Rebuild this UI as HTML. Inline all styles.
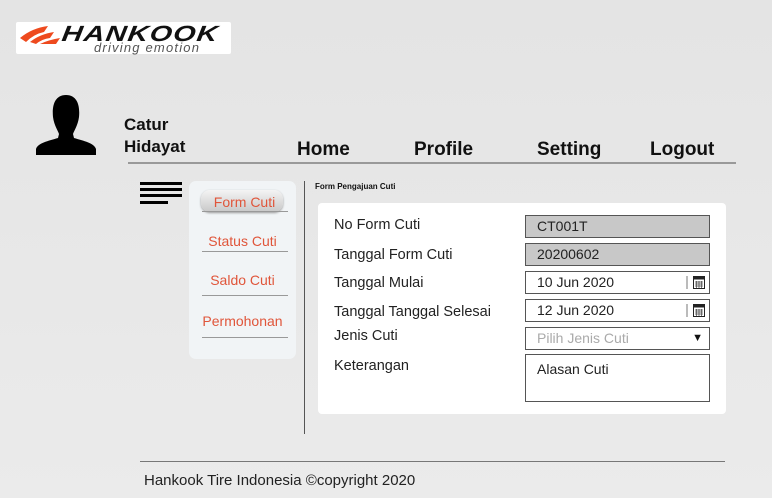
<html><head><style>
body{margin:0;width:772px;height:498px;background:linear-gradient(#e4e4e4,#ebebeb);font-family:"Liberation Sans",sans-serif;position:relative;overflow:hidden}
.a{position:absolute}
.nav{font-weight:bold;font-size:19px;color:#111;top:139px}
.menu{color:#e0553a;font-size:14px;left:189px;width:107px;text-align:center}
.ml{height:1px;background:#999;left:202px;width:86px}
.lab{left:334px;font-size:14.5px;color:#222}
.f{left:525px;border:1px solid #555;font-size:14px;color:#222;line-height:21px;padding-left:11px;box-sizing:border-box;width:185px;height:23px}
.cal{position:absolute;right:3px;top:3px}
</style></head><body>
<div class="a" style="left:16px;top:22px;width:215px;height:32px;background:#fff;border-radius:2px"></div>
<svg class="a" style="left:18px;top:24px" width="44" height="22"><path d="M2 14 Q14 4 30 2 L26 8 Q16 10 8 18Z M12 18 Q22 10 36 8 L32 14 Q24 15 18 20Z M22 20 Q30 16 42 14 L38 20Z" fill="#ee4a1e"/></svg>
<div class="a" style="left:62px;top:23px;font:italic 900 22px/22px 'Liberation Sans';letter-spacing:1px;color:#111;transform:skewX(-8deg) scaleX(1.3);transform-origin:left">HANKOOK</div>
<div class="a" style="left:94px;top:41px;font:italic 13px/13px 'Liberation Sans';color:#555;letter-spacing:1.2px">driving emotion</div>
<svg class="a" style="left:34px;top:93px" width="64" height="62"><path d="M32 2 C20 2 18 14 19 24 C20 32 24 38 25 41 L24 45 C14 48 4 50 2 56 L2 62 L62 62 L62 56 C60 50 50 48 40 45 L39 41 C40 38 44 32 45 24 C46 14 44 2 32 2Z" fill="#000"/></svg>
<div class="a" style="left:124px;top:114px;font-weight:bold;font-size:17px;line-height:22px;color:#111">Catur<br>Hidayat</div>
<div class="a nav" style="left:297px">Home</div>
<div class="a nav" style="left:414px">Profile</div>
<div class="a nav" style="left:537px">Setting</div>
<div class="a nav" style="left:650px">Logout</div>
<div class="a" style="left:128px;top:162px;width:608px;height:2px;background:#999"></div>
<div class="a" style="left:140px;top:182px;width:42px;height:3px;background:#000"></div>
<div class="a" style="left:140px;top:188px;width:42px;height:3px;background:#000"></div>
<div class="a" style="left:140px;top:194px;width:42px;height:3px;background:#000"></div>
<div class="a" style="left:140px;top:201px;width:28px;height:3px;background:#000"></div>
<div class="a" style="left:189px;top:181px;width:107px;height:178px;background:#f1f4f6;border-radius:7px"></div>
<div class="a" style="left:201px;top:190px;width:82px;height:22px;border-radius:9px;background:linear-gradient(#f4f4f4,#c8c8c8);box-shadow:0 1px 2px #999"></div>
<div class="a menu" style="top:194px;left:191px">Form Cuti</div>
<div class="a ml" style="top:211px"></div>
<div class="a menu" style="top:233px">Status Cuti</div>
<div class="a ml" style="top:251px"></div>
<div class="a menu" style="top:272px">Saldo Cuti</div>
<div class="a ml" style="top:295px"></div>
<div class="a menu" style="top:313px">Permohonan</div>
<div class="a ml" style="top:337px"></div>
<div class="a" style="left:304px;top:181px;width:1px;height:253px;background:#555"></div>
<div class="a" style="left:315px;top:182px;font-size:8px;font-weight:bold;color:#111">Form Pengajuan Cuti</div>
<div class="a" style="left:318px;top:203px;width:408px;height:211px;background:#fff;border-radius:4px"></div>
<div class="a lab" style="top:217px">No Form Cuti</div>
<div class="a lab" style="top:247px">Tanggal Form Cuti</div>
<div class="a lab" style="top:275px">Tanggal Mulai</div>
<div class="a lab" style="top:304px">Tanggal Tanggal Selesai</div>
<div class="a lab" style="top:328px">Jenis Cuti</div>
<div class="a lab" style="top:358px">Keterangan</div>
<div class="a f" style="top:215px;background:#c8c8c8">CT001T</div>
<div class="a f" style="top:243px;background:#c8c8c8">20200602</div>
<div class="a f" style="top:271px;background:#fff">10 Jun 2020<svg class="cal" width="20" height="15"><path d="M1 1V14" stroke="#777"/><rect x="7.5" y="1.5" width="11" height="12" fill="#fff" stroke="#222"/><rect x="7.5" y="1.5" width="11" height="3" fill="#222"/><path d="M9 7H17M9 9H17M9 11H17M10.5 6V13M13 6V13M15.5 6V13" stroke="#444" stroke-width=".7"/></svg></div>
<div class="a f" style="top:299px;background:#fff">12 Jun 2020<svg class="cal" width="20" height="15"><path d="M1 1V14" stroke="#777"/><rect x="7.5" y="1.5" width="11" height="12" fill="#fff" stroke="#222"/><rect x="7.5" y="1.5" width="11" height="3" fill="#222"/><path d="M9 7H17M9 9H17M9 11H17M10.5 6V13M13 6V13M15.5 6V13" stroke="#444" stroke-width=".7"/></svg></div>
<div class="a f" style="top:327px;background:#fff;color:#aaa;font-size:14px">Pilih Jenis Cuti<span style="position:absolute;right:6px;top:0;color:#111;font-size:11px">▼</span></div>
<div class="a f" style="top:354px;height:48px;background:#fff;line-height:28px">Alasan Cuti</div>
<div class="a" style="left:140px;top:461px;width:585px;height:1px;background:#777"></div>
<div class="a" style="left:144px;top:472px;font-size:15px;color:#222">Hankook Tire Indonesia ©copyright 2020</div>
</body></html>
